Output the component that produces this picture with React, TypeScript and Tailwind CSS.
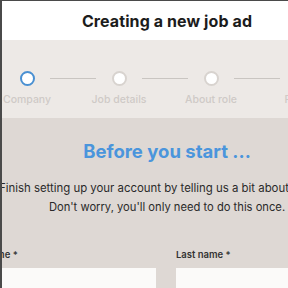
import React from "react";

const steps = [
  { label: "Company", active: true },
  { label: "Job details" },
  { label: "About role" },
  { label: "Publish" },
];

export default function App() {
  return (
    <div className="w-[288px] h-[288px] overflow-hidden flex bg-[#4a4a4a]" style={{ fontFamily: "Inter, 'Noto Sans', sans-serif" }}>
      <div className="w-[2px] shrink-0" />
      <div className="flex-1 flex flex-col mt-px overflow-hidden">
        <div className="h-[39px] bg-white flex items-center justify-center shrink-0">
          <h1 className="ml-[44px] text-[16px] font-bold text-[#1c1c1c] tracking-[0.1px] whitespace-nowrap">Creating a new job ad</h1>
        </div>
        <div className="h-[78px] bg-[#ede9e6] shrink-0 relative overflow-hidden">
          <div className="flex items-start ml-[-21px] mt-[31px]">
            {steps.map((s) => (
              <div key={s.label} className="w-[92px] shrink-0 flex flex-col items-center">
                <div className={`w-[15px] h-[15px] rounded-full bg-white border-2 ${s.active ? "border-[#4a90d2]" : "border-[#d8d3cf]"}`} />
                <div className="mt-[6px] text-[10.5px] font-medium text-[#cfcac6] whitespace-nowrap">{s.label}</div>
              </div>
            ))}
          </div>
          <div className="absolute top-[38px] left-[48px] w-[46px] h-px bg-[#c9c5c1]" />
          <div className="absolute top-[38px] left-[140px] w-[46px] h-px bg-[#c9c5c1]" />
          <div className="absolute top-[38px] left-[232px] w-[46px] h-px bg-[#c9c5c1]" />
        </div>
        <div className="flex-1 bg-[#ded8d4] flex flex-col">
          <h2 className="mt-[20px] ml-[44px] text-center text-[18.5px] font-bold text-[#4a95dc] whitespace-nowrap">Before you start ...</h2>
          <div className="mt-[13px] leading-[19px] text-[#2a2a2a]">
            <p className="ml-[-3px] text-[11.4px] whitespace-nowrap">Finish setting up your account by telling us a bit about yourself.</p>
            <p className="ml-[44px] text-[11.2px] text-center whitespace-nowrap">Don't worry, you'll only need to do this once.</p>
          </div>
          <div className="mt-[31px] flex gap-[20px] ml-[-40px]">
            <div className="w-[194px] shrink-0">
              <div className="text-[9.5px] font-semibold text-[#333] text-right pr-[178px] whitespace-nowrap">First name *</div>
              <div className="mt-[6px] h-[30px] bg-[#fbfaf9]" />
            </div>
            <div className="flex-1">
              <div className="text-[9.5px] font-semibold text-[#333] whitespace-nowrap">Last name *</div>
              <div className="mt-[6px] h-[30px] bg-[#fbfaf9]" />
            </div>
          </div>
        </div>
      </div>
    </div>
  );
}
